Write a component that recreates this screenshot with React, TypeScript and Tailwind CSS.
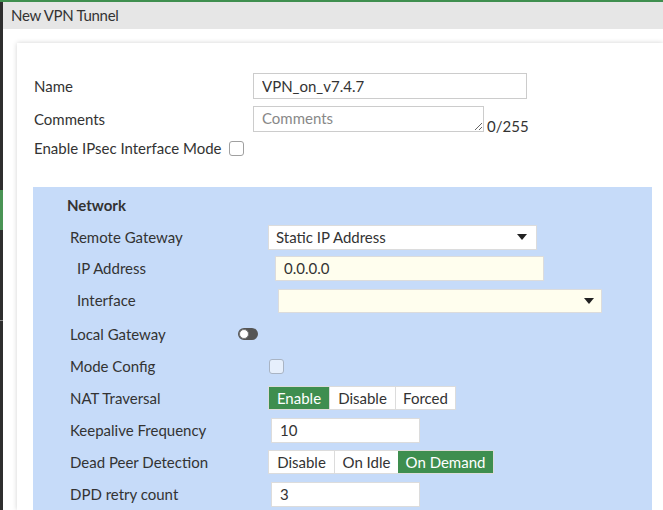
import React from 'react';

const Caret = () => (
  <svg width="10" height="6" viewBox="0 0 10 6" className="shrink-0">
    <path d="M0 0h10L5 6z" fill="#222" />
  </svg>
);

const Row: React.FC<{ label: string; indent?: boolean; h: string; lw: string; children?: React.ReactNode }> = ({
  label,
  indent,
  h,
  lw,
  children,
}) => (
  <div className={`flex items-center ${h}`}>
    <div className={`${indent ? 'pl-[7px]' : ''} ${lw} shrink-0`}>{label}</div>
    {children}
  </div>
);

const Toggle: React.FC<{ items: string[]; active: number; widths: string[] }> = ({ items, active, widths }) => (
  <div className="flex h-[24px] border border-[#dcdcdc] bg-white">
    {items.map((it, i) =>
      i === active ? (
        <div key={it} className={`${widths[i]} flex items-center justify-center bg-[#3e8e4f] text-white`}>
          {it}
        </div>
      ) : (
        <div
          key={it}
          className={`${widths[i]} flex items-center justify-center ${i > 0 ? 'border-l border-[#dcdcdc]' : ''}`}
        >
          {it}
        </div>
      )
    )}
  </div>
);

export default function App() {
  return (
    <div className="w-[663px] h-[510px] overflow-hidden bg-white flex flex-col font-['Lato','Open_Sans',sans-serif] text-[15px] text-[#333]">
      <div className="h-[2px] bg-[#3f8f4f] shrink-0" />
      <div className="flex flex-1 min-h-0">
        {/* left dark strip */}
        <div className="w-[3px] bg-[#2e2e2e] flex flex-col shrink-0">
          <div className="h-[188px]" />
          <div className="h-[40px] bg-[#4a9455]" />
          <div className="h-[90px]" />
          <div className="h-[1px] bg-[#8a8a8a]" />
        </div>

        <div className="flex-1 flex flex-col min-w-0">
          <div className="h-[27px] bg-[#e6e6e6] flex items-center pl-[8px] text-[15px] tracking-[-0.3px] text-[#333] shrink-0">
            New VPN Tunnel
          </div>

          <div className="flex-1 pl-[14px] pt-[14px] min-h-0">
            <div className="h-full bg-white shadow-[0_0_5px_rgba(0,0,0,0.18)] pt-[30px]">
              {/* top section */}
              <div className="pl-[17px] flex flex-col">
                <div className="flex items-center h-[26px]">
                  <div className="w-[219px] shrink-0">Name</div>
                  <input
                    readOnly
                    value="VPN_on_v7.4.7"
                    className="w-[274px] h-[26px] border border-[#cccccc] px-[8px] text-[#333] outline-none"
                  />
                </div>
                <div className="flex items-end h-[26px] mt-[7px]">
                  <div className="w-[219px] shrink-0 self-center">Comments</div>
                  <textarea
                    placeholder="Comments"
                    className="w-[231px] h-[26px] border border-[#cccccc] px-[8px] py-[2px] leading-[18px] resize placeholder:text-[#888] outline-none block"
                  />
                  <span className="ml-[3px] leading-[16px] translate-y-[2px]">0/255</span>
                </div>
                <div className="flex items-center h-[26px] mt-[3px]">
                  <span>Enable IPsec Interface Mode</span>
                  <span className="ml-[8px] w-[15px] h-[15px] rounded-[3px] border border-[#a0a0a0] bg-white" />
                </div>
              </div>

              {/* network panel */}
              <div className="ml-[16px] mr-[11px] mt-[26px] h-full bg-[#c6dbf9] pt-[3px]">
                <div className="h-[31px] flex items-center pl-[34px] font-bold">Network</div>
                <div className="pl-[37px]">
                  <Row label="Remote Gateway" h="h-[32px]" lw="w-[198px]">
                    <div className="w-[269px] h-[25px] bg-white border border-[#dcdcdc] flex items-center justify-between pl-[7px] pr-[9px]">
                      <span>Static IP Address</span>
                      <Caret />
                    </div>
                  </Row>
                  <Row label="IP Address" indent h="h-[30px]" lw="w-[205px]">
                    <div className="w-[269px] h-[25px] bg-[#fffeee] border border-[#dcdcdc] flex items-center pl-[8px]">
                      0.0.0.0
                    </div>
                  </Row>
                  <Row label="Interface" indent h="h-[35px]" lw="w-[208px]">
                    <div className="w-[324px] h-[24px] bg-[#fffeee] border border-[#dcdcdc] flex items-center justify-end pr-[7px]">
                      <Caret />
                    </div>
                  </Row>
                  <Row label="Local Gateway" h="h-[32px]" lw="w-[168px]">
                    <div className="w-[20px] h-[12px] rounded-full bg-[#555] flex items-center pl-[1px]">
                      <div className="w-[10px] h-[10px] rounded-full bg-white border border-[#777]" />
                    </div>
                  </Row>
                  <Row label="Mode Config" h="h-[32px]" lw="w-[199px]">
                    <div className="w-[15px] h-[15px] rounded-[3px] border border-[#a9b4c4] bg-[#e6effc]" />
                  </Row>
                  <Row label="NAT Traversal" h="h-[32px]" lw="w-[198px]">
                    <Toggle items={['Enable', 'Disable', 'Forced']} active={0} widths={['w-[60px]', 'w-[66px]', 'w-[60px]']} />
                  </Row>
                  <Row label="Keepalive Frequency" h="h-[32px]" lw="w-[201px]">
                    <div className="w-[149px] h-[25px] bg-white border border-[#dcdcdc] flex items-center pl-[8px]">10</div>
                  </Row>
                  <Row label="Dead Peer Detection" h="h-[32px]" lw="w-[198px]">
                    <Toggle
                      items={['Disable', 'On Idle', 'On Demand']}
                      active={2}
                      widths={['w-[65px]', 'w-[64px]', 'w-[95px]']}
                    />
                  </Row>
                  <Row label="DPD retry count" h="h-[32px]" lw="w-[201px]">
                    <div className="w-[149px] h-[25px] bg-white border border-[#dcdcdc] flex items-center pl-[8px]">3</div>
                  </Row>
                </div>
              </div>
            </div>
          </div>
        </div>
      </div>
    </div>
  );
}
